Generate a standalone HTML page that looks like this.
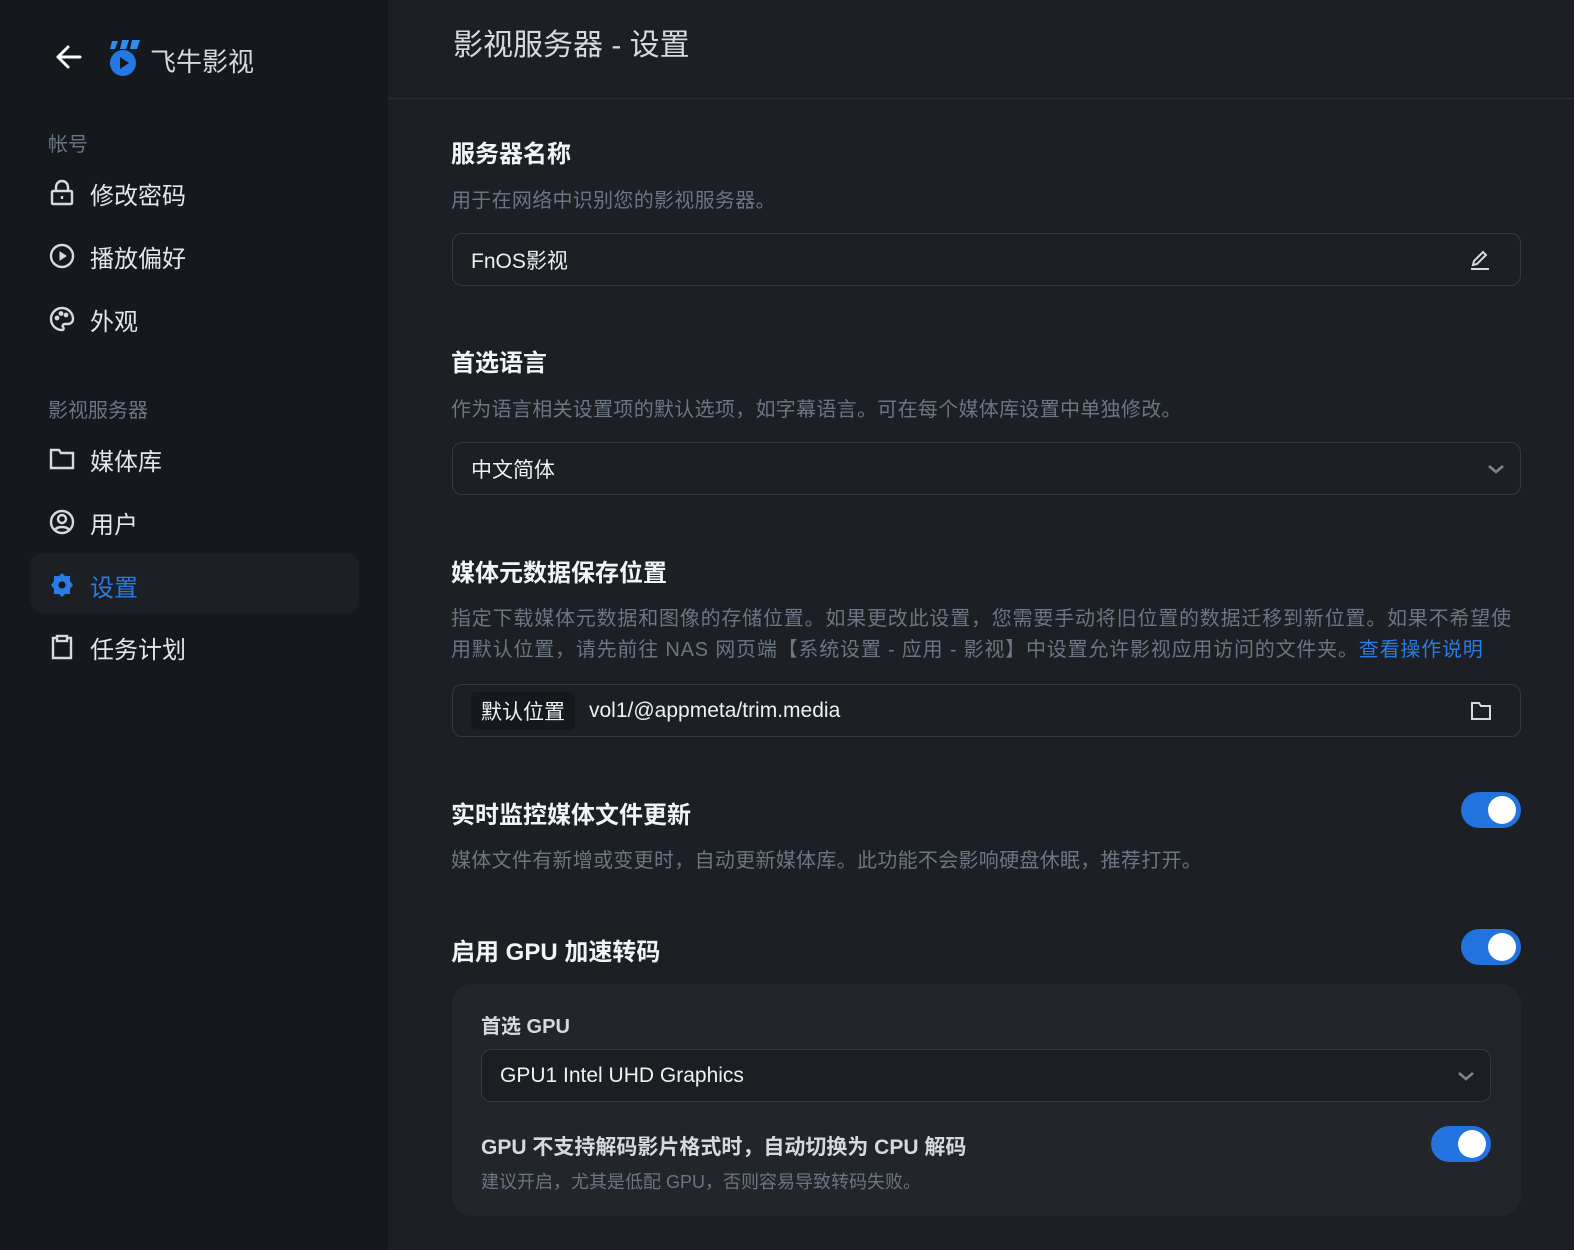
<!DOCTYPE html>
<html><head><meta charset="utf-8"><style>
*{box-sizing:border-box;margin:0;padding:0}
body{width:1574px;height:1250px;background:#1c1f23;font-family:"Liberation Sans","Noto Sans CJK SC",sans-serif;color:#e6e8eb;position:relative;overflow:hidden}
.side{position:absolute;left:0;top:0;width:388px;height:1250px;background:#15181c}
.abs{position:absolute}
.grp{position:absolute;left:48px;font-size:20px;color:#6b7583}
.item{position:absolute;left:48px;font-size:24px;color:#e3e6ea;display:flex;align-items:center;gap:14px;height:40px}
.item svg{width:28px;height:28px}
.hdr{position:absolute;left:388px;top:0;right:0;height:99px;border-bottom:1px solid #2a2e33}
.h{position:absolute;left:451px;font-size:24px;font-weight:bold;color:#f1f3f5}
.d{position:absolute;left:451px;font-size:20px;color:#6b7583;line-height:31px;letter-spacing:0.3px}
.inp{position:absolute;left:452px;width:1069px;height:53px;border:1px solid #363a40;border-radius:10px;font-size:21px;display:flex;align-items:center;padding-left:18px;color:#eef0f2}
.tog{position:absolute;width:60px;height:36px;border-radius:18px;background:#2272df}
.tog::after{content:"";position:absolute;right:5px;top:4px;width:28px;height:28px;border-radius:50%;background:#fff}
</style></head><body>
<div class="side"></div>
<svg class="abs" style="left:54px;top:43px" width="30" height="28" viewBox="0 0 30 28"><path d="M26 14H4M14 4L4 14l10 10" stroke="#fff" stroke-width="3" fill="none" stroke-linecap="round" stroke-linejoin="round"/></svg>
<svg class="abs" style="left:107px;top:37px" width="36" height="40" viewBox="0 0 36 40"><path d="M5 4h6l-3 8H3zM15 3h7l-3 9h-6zM25 3h8l-3 9h-7z" fill="#2b8ef0"/><circle cx="16" cy="26" r="13" fill="#2478e6"/><path d="M13 20v12l9-6z" fill="#15181c"/></svg>
<div class="abs" style="left:150px;top:42px;font-size:26px;color:#d6dade">飞牛影视</div>
<div class="grp" style="top:128px">帐号</div>
<div class="item" style="top:173px"><svg viewBox="0 0 28 28" fill="none" stroke="#d6dade" stroke-width="2.4"><rect x="4" y="12" width="20" height="13" rx="1"/><path d="M8 12V8a6 6 0 0 1 12 0v4"/><path d="M14 17v3"/></svg>修改密码</div>
<div class="item" style="top:236px"><svg viewBox="0 0 28 28" fill="none" stroke="#d6dade" stroke-width="2.4"><circle cx="14" cy="14" r="11"/><path d="M12 10v8l6-4z" fill="#d6dade" stroke-width="1"/></svg>播放偏好</div>
<div class="item" style="top:299px"><svg viewBox="0 0 28 28" fill="none" stroke="#d6dade" stroke-width="2.4"><path d="M14 3a11 11 0 1 0 0 22c2 0 2-2 1-3s0-3 2-3h3a5 5 0 0 0 5-5C25 8 20 3 14 3z"/><circle cx="9" cy="13" r="1.2" fill="#d6dade"/><circle cx="13" cy="8.5" r="1.2" fill="#d6dade"/><circle cx="18" cy="10" r="1.2" fill="#d6dade"/></svg>外观</div>
<div class="grp" style="top:394px">影视服务器</div>
<div class="item" style="top:439px"><svg viewBox="0 0 28 28" fill="none" stroke="#d6dade" stroke-width="2.4"><path d="M3 5h8l2 3h12v15H3z"/></svg>媒体库</div>
<div class="item" style="top:502px"><svg viewBox="0 0 28 28" fill="none" stroke="#d6dade" stroke-width="2.4"><circle cx="14" cy="14" r="11"/><circle cx="14" cy="11" r="4"/><path d="M7 22c2-4 12-4 14 0"/></svg>用户</div>
<div class="abs" style="left:30px;top:553px;width:329px;height:60px;border-radius:12px;background:#1c1f24"></div>
<div class="item" style="top:565px;color:#2b7be4"><svg viewBox="0 0 28 28"><path d="M14 2l3 3h5v5l3 4-3 4v5h-5l-3 3-3-3H6v-5l-3-4 3-4V5h5z" fill="#2b7be4"/><circle cx="14" cy="14" r="3.6" fill="#15181c"/></svg>设置</div>
<div class="item" style="top:627px"><svg viewBox="0 0 28 28" fill="none" stroke="#d6dade" stroke-width="2.4"><path d="M9 5H5v20h18V5h-4"/><rect x="9" y="3" width="10" height="5"/></svg>任务计划</div>

<div class="hdr"></div>
<div class="abs" style="left:453px;top:20px;font-size:30px;color:#d6dade">影视服务器 - 设置</div>

<div class="h" style="top:134px">服务器名称</div>
<div class="d" style="top:186px">用于在网络中识别您的影视服务器。</div>
<div class="inp" style="top:233px">FnOS影视<svg class="abs" style="right:28px;top:14px" width="24" height="24" viewBox="0 0 24 24" fill="none" stroke="#d6dade" stroke-width="2"><path d="M5 17l1-4 9-9 3 3-9 9z"/><path d="M3 21h18"/></svg></div>

<div class="h" style="top:343px">首选语言</div>
<div class="d" style="top:395px">作为语言相关设置项的默认选项，如字幕语言。可在每个媒体库设置中单独修改。</div>
<div class="inp" style="top:442px">中文简体<svg class="abs" style="right:14px;top:16px" width="20" height="20" viewBox="0 0 20 20" fill="none" stroke="#7d8590" stroke-width="2.6"><path d="M3 7l7 6 7-6"/></svg></div>

<div class="h" style="top:553px">媒体元数据保存位置</div>
<div class="d" style="top:604px;width:1080px;letter-spacing:0.8px">指定下载媒体元数据和图像的存储位置。如果更改此设置，您需要手动将旧位置的数据迁移到新位置。如果不希望使用默认位置，请先前往 NAS 网页端【系统设置 - 应用 - 影视】中设置允许影视应用访问的文件夹。<span style="color:#2b7be4">查看操作说明</span></div>
<div class="inp" style="top:684px"><span style="background:#15181c;border-radius:6px;padding:4px 10px;margin-right:14px">默认位置</span>vol1/@appmeta/trim.media<svg class="abs" style="right:28px;top:16px" width="22" height="20" viewBox="0 0 22 20" fill="none" stroke="#d6dade" stroke-width="2"><path d="M2 2h7l2 3h9v13H2z"/></svg></div>

<div class="h" style="top:795px">实时监控媒体文件更新</div>
<div class="tog" style="left:1461px;top:792px"></div>
<div class="d" style="top:846px">媒体文件有新增或变更时，自动更新媒体库。此功能不会影响硬盘休眠，推荐打开。</div>

<div class="h" style="top:932px">启用 GPU 加速转码</div>
<div class="tog" style="left:1461px;top:929px"></div>
<div class="abs" style="left:452px;top:984px;width:1069px;height:232px;border-radius:20px;background:#22252a"></div>
<div class="abs" style="left:481px;top:1010px;font-size:20px;font-weight:bold;color:#d6dade">首选 GPU</div>
<div class="inp" style="left:481px;width:1010px;top:1049px;background:#1b1e22">GPU1 Intel UHD Graphics<svg class="abs" style="right:14px;top:16px" width="20" height="20" viewBox="0 0 20 20" fill="none" stroke="#7d8590" stroke-width="2.6"><path d="M3 7l7 6 7-6"/></svg></div>
<div class="abs" style="left:481px;top:1131px;font-size:21px;font-weight:bold;color:#d6dade">GPU 不支持解码影片格式时，自动切换为 CPU 解码</div>
<div class="tog" style="left:1431px;top:1126px"></div>
<div class="abs" style="left:481px;top:1168px;font-size:18px;color:#6b7583">建议开启，尤其是低配 GPU，否则容易导致转码失败。</div>
</body></html>
